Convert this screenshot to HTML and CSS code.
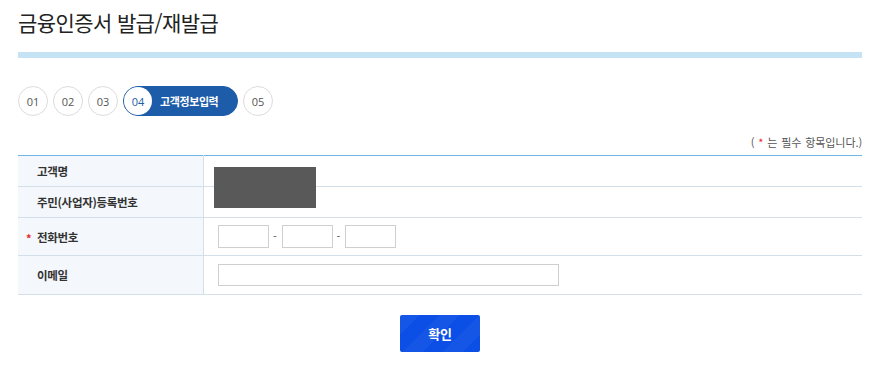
FILE: index.html
```html
<!DOCTYPE html>
<html lang="ko">
<head>
<meta charset="utf-8">
<title>금융인증서 발급/재발급</title>
<link rel="stylesheet" href="styles.css">
</head>
<body>
<div class="page">
  <h1 class="title">금융인증서 발급/재발급</h1>
  <div class="title-bar"></div>

  <ol class="steps">
    <li class="step">01</li>
    <li class="step">02</li>
    <li class="step">03</li>
    <li class="step step-active"><span class="step-num">04</span><span class="step-label">고객정보입력</span></li>
    <li class="step">05</li>
  </ol>

  <p class="req-note">( <span class="req">*</span> 는 필수 항목입니다.)</p>

  <table class="form-table">
    <tbody>
      <tr class="row-sm row-first">
        <th>고객명</th>
        <td><div class="masked-wrap"><div class="masked"></div></div></td>
      </tr>
      <tr class="row-sm">
        <th>주민(사업자)등록번호</th>
        <td></td>
      </tr>
      <tr class="row-lg">
        <th class="required">전화번호</th>
        <td>
          <div class="phone">
            <input class="inp inp-phone" type="text">
            <span class="dash">-</span>
            <input class="inp inp-phone" type="text">
            <span class="dash">-</span>
            <input class="inp inp-phone" type="text">
          </div>
        </td>
      </tr>
      <tr class="row-lg">
        <th>이메일</th>
        <td><input class="inp inp-email" type="text"></td>
      </tr>
    </tbody>
  </table>

  <div class="actions">
    <button class="btn-ok" type="button">확인</button>
  </div>
</div>
</body>
</html>
```

FILE: styles.css
```css
* { box-sizing: border-box; }
html, body { margin: 0; padding: 0; background: #fff; }
body {
  font-family: "Noto Sans CJK KR", "Noto Sans", sans-serif;
  color: #333;
}
.page {
  width: 844px;
  margin-left: 18px;
}
.title {
  margin: 0;
  padding-top: 7px;
  font-size: 21px;
  line-height: 30px;
  font-weight: 400;
  letter-spacing: -0.6px;
  color: #222;
}
.title-bar {
  margin-top: 15px;
  height: 6px;
  background: #c4e3f4;
}
.steps {
  list-style: none;
  margin: 28px 0 0;
  padding: 0;
  display: flex;
  gap: 5px;
}
.step {
  width: 30px;
  height: 30px;
  border: 1px solid #dcdcdc;
  border-radius: 50%;
  display: flex;
  align-items: center;
  justify-content: center;
  font-size: 11px;
  color: #555;
  font-family: "Open Sans", "Noto Sans", sans-serif;
}
.step-active {
  width: 115px;
  border-radius: 15px;
  border: 1px solid #1d5ca9;
  background: #1d5ca9;
  justify-content: flex-start;
  padding: 0;
}
.step-num {
  width: 28px;
  height: 28px;
  border-radius: 50%;
  background: #fff;
  display: flex;
  align-items: center;
  justify-content: center;
  color: #1d5ca9;
  font-size: 11px;
  flex: none;
}
.step-label {
  margin-left: 8px;
  color: #fff;
  font-family: "Noto Sans CJK KR", sans-serif;
  font-weight: 700;
  font-size: 11px;
  letter-spacing: -0.4px;
}
.req-note {
  margin: 18px 0 0;
  text-align: right;
  font-size: 11px;
  line-height: 16px;
  color: #555;
  word-spacing: 1px;
  letter-spacing: -0.1px;
}
.req { color: #e8262e; }
.form-table {
  width: 100%;
  margin-top: 5px;
  border-collapse: collapse;
}
.form-table th,
.form-table td {
  border-bottom: 1px solid #d3e0ea;
  padding: 0;
  vertical-align: middle;
}
.form-table .row-first th,
.form-table .row-first td {
  border-top: 1px solid #6fb5e8;
}
.form-table th {
  width: 185px;
  background: #f4f7fb;
  border-right: 1px solid #d3e0ea;
  text-align: left;
  padding-left: 19px;
  font-size: 11.5px;
  font-weight: 700;
  color: #333;
  letter-spacing: -0.3px;
}
.form-table th.required { position: relative; }
.form-table th.required::before {
  content: "*";
  position: absolute;
  left: 8px;
  top: 50%;
  transform: translateY(-45%);
  color: #e8262e;
  font-size: 11px;
}
.form-table td { padding-left: 14px; }
.row-sm { height: 31px; }
.row-lg { height: 38px; }
.row-lg:last-child { height: 39px; }
.masked-wrap { position: relative; height: 1px; }
.masked {
  position: absolute;
  left: -4px;
  top: -4px;
  width: 102px;
  height: 41px;
  background: #595959;
}
.phone {
  display: flex;
  align-items: center;
}
.dash {
  width: 13px;
  text-align: center;
  font-size: 11px;
  color: #555;
  line-height: 1;
}
.dash:nth-of-type(2) { width: 12px; }
.inp {
  border: 1px solid #cfcfcf;
  background: #fff;
  margin: 0;
  padding: 0 4px;
  font-size: 12px;
  outline: none;
}
.inp-phone { width: 51px; height: 23px; }
.inp-email { width: 341px; height: 22px; display: block; }
.actions {
  margin-top: 20px;
  display: flex;
  justify-content: center;
}
.btn-ok {
  width: 80px;
  height: 37px;
  border: 0;
  border-radius: 2px;
  background-color: #0b4fe6;
  background-image:
    linear-gradient(135deg, rgba(255,255,255,0.04) 25%, transparent 25%, transparent 50%, rgba(255,255,255,0.04) 50%, rgba(255,255,255,0.04) 75%, transparent 75%);
  background-size: 40px 40px;
  color: #fff;
  font-family: "Noto Sans CJK KR", sans-serif;
  font-weight: 700;
  font-size: 13px;
  letter-spacing: -0.3px;
  cursor: pointer;
}
```
